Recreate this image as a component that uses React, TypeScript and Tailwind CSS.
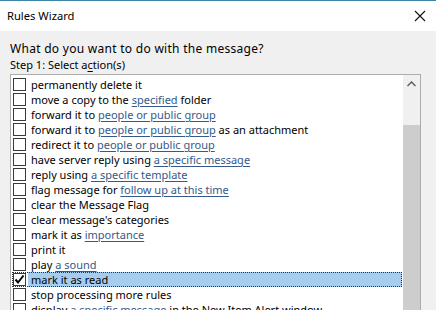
type Part = string | { link: string };

interface Action {
  parts: Part[];
  checked?: boolean;
  selected?: boolean;
}

const actions: Action[] = [
  { parts: ["permanently delete it"] },
  { parts: ["move a copy to the ", { link: "specified" }, " folder"] },
  { parts: ["forward it to ", { link: "people or public group" }] },
  { parts: ["forward it to ", { link: "people or public group" }, " as an attachment"] },
  { parts: ["redirect it to ", { link: "people or public group" }] },
  { parts: ["have server reply using ", { link: "a specific message" }] },
  { parts: ["reply using ", { link: "a specific template" }] },
  { parts: ["flag message for ", { link: "follow up at this time" }] },
  { parts: ["clear the Message Flag"] },
  { parts: ["clear message's categories"] },
  { parts: ["mark it as ", { link: "importance" }] },
  { parts: ["print it"] },
  { parts: ["play ", { link: "a sound" }] },
  { parts: ["mark it as read"], checked: true, selected: true },
  { parts: ["stop processing more rules"] },
  { parts: ["display ", { link: "a specific message" }, " in the New Item Alert window"] },
];

function Checkbox({ checked }: { checked?: boolean }) {
  return (
    <span className="w-[13px] h-[13px] border border-[#3a3a3a] bg-white flex items-center justify-center shrink-0">
      {checked && (
        <svg width="11" height="11" viewBox="0 0 11 11">
          <path d="M1.5 5.5 L4 8.5 L9.5 1.5" fill="none" stroke="#000" strokeWidth="2" />
        </svg>
      )}
    </span>
  );
}

function ActionRow({ action }: { action: Action }) {
  return (
    <div
      className={`flex h-[15px] mx-[1px] ${
        action.selected ? "outline outline-1 outline-dotted outline-[#333] -outline-offset-1" : ""
      }`}
    >
      <div className="w-[16px] flex items-center pl-[1px] shrink-0">
        <Checkbox checked={action.checked} />
      </div>
      <div
        className={`flex-1 pl-[3px] leading-[15px] whitespace-nowrap overflow-hidden ${
          action.selected ? "bg-[#a6cdee]" : ""
        }`}
      >
        {action.parts.map((p, i) =>
          typeof p === "string" ? (
            <span key={i}>{p}</span>
          ) : (
            <span key={i} className="text-[#34598a] underline underline-offset-2 decoration-[#34598a]">
              {p.link}
            </span>
          )
        )}
      </div>
    </div>
  );
}

export default function App() {
  return (
    <div
      className="w-[436px] h-[310px] overflow-hidden bg-[#f0f0f0] text-black text-[11px]"
      style={{ fontFamily: '"Segoe UI", "Noto Sans", sans-serif' }}
    >
      <div className="h-[31px] bg-white border-t border-[#3c84a8] flex items-center justify-between pl-[7px] pr-[10px]">
        <span className="text-[11.2px]">Rules Wizard</span>
        <svg width="12" height="12" viewBox="0 0 12 12">
          <path d="M1 1 L11 11 M11 1 L1 11" stroke="#111" strokeWidth="1.1" />
        </svg>
      </div>

      <div className="pt-[10px] pl-[10px] pr-[15px]">
        <div className="leading-[15px] text-[12px] tracking-[0.28px]">What do you want to do with the message?</div>
        <div className="leading-[15px] mt-[1px]">
          Step 1: Select a<span className="underline underline-offset-2">c</span>tion(s)
        </div>

        <div className="mt-[2px] h-[250px] border border-[#adadad] bg-white flex">
          <div className="flex-1 pt-[2px] overflow-hidden">
            {actions.map((a, i) => (
              <ActionRow key={i} action={a} />
            ))}
          </div>
          <div className="w-[17px] bg-[#f0f0f0] flex flex-col">
            <div className="h-[17px] flex items-center justify-center">
              <svg width="9" height="6" viewBox="0 0 9 6">
                <path d="M0.5 5 L4.5 1 L8.5 5" fill="none" stroke="#606060" strokeWidth="1.5" />
              </svg>
            </div>
            <div className="h-[33px]" />
            <div className="flex-1 bg-[#cdcdcd]" />
          </div>
        </div>
      </div>
    </div>
  );
}
